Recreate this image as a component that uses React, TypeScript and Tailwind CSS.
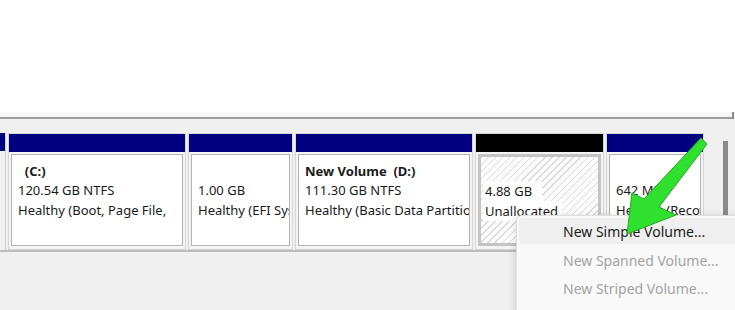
import React from "react";

const font = { fontFamily: '"Segoe UI", "Noto Sans", "Open Sans", sans-serif' };

function Partition({
  width,
  header = "bg-[#000080]",
  title,
  size,
  status,
  unallocated = false,
}: {
  width: string;
  header?: string;
  title?: string;
  size?: string;
  status?: string;
  unallocated?: boolean;
}) {
  return (
    <div className={`${width} flex flex-col shrink-0 border border-[#d6d6d6] bg-[#f4f4f4]`}>
      <div className={`h-[18px] ${header}`} />
      <div className="flex-1 p-[2px] pb-[3px]">
        {unallocated ? (
          <div className="h-full border-[3px] border-[#c4c4c4] bg-[repeating-linear-gradient(135deg,#d8d8d8_0px,#d8d8d8_1px,#ffffff_1px,#ffffff_5px)] pt-[24px] pl-[2px] text-[13px] leading-[20px] text-[#1a1a1a]">
            <div className="w-fit bg-white pr-[10px] pl-[2px]">{size}</div>
            <div className="w-fit bg-white pr-[4px] pl-[2px]">{status}</div>
          </div>
        ) : (
          <div className="h-full overflow-hidden whitespace-nowrap border border-[#b4b4b4] bg-white pl-[6px] pt-[6px] text-[13px] leading-[20px] text-[#1a1a1a]">
            <div className="h-[19px] font-bold whitespace-pre">{title ?? ""}</div>
            <div>{size}</div>
            <div>{status}</div>
          </div>
        )}
      </div>
    </div>
  );
}

export default function App() {
  return (
    <div className="relative h-[310px] w-[735px] overflow-hidden bg-[#f0f0f0]" style={font}>
      <div className="h-[112px] bg-white" />
      <div className="flex h-[7px]">
        <div className="flex-1 border-b-2 border-[#9c9c9c] bg-[#f6f6f6]" />
        <div className="w-[2px] bg-[#8c8c8c]" />
        <div className="w-[1px]" />
      </div>

      <div className="mt-[14px] flex h-[119px] items-stretch gap-[2px] border-b-2 border-[#bdbdbd]">
        <div className="flex w-[6px] shrink-0 flex-col border-r border-[#d0d0d0]">
          <div className="h-[18px] bg-[#000080]" />
        </div>
        <Partition width="w-[178px]" title="  (C:)" size="120.54 GB NTFS" status="Healthy (Boot, Page File," />
        <Partition width="w-[105px]" size="1.00 GB" status="Healthy (EFI System Partition)" />
        <Partition width="w-[178px]" title="New Volume  (D:)" size="111.30 GB NTFS" status="Healthy (Basic Data Partition)" />
        <Partition width="w-[129px]" header="bg-black" size="4.88 GB" status="Unallocated" unallocated />
        <Partition width="w-[98px]" size="642 MB" status="Healthy (Recovery Partition)" />
        <div className="ml-[17px] mt-[8px] h-[108px] w-[5px] bg-[#8a8a8a]" />
      </div>

      {/* context menu */}
      <div className="absolute left-[516px] top-[215px] h-[120px] w-[240px] rounded-[6px] border border-[#dedede] bg-[#f9f9f9] p-[2px] pr-0 text-[14px] text-[#1b1b1b] shadow-[0_2px_8px_rgba(0,0,0,0.18)]">
        <div className="flex h-[26px] items-center rounded-[4px] bg-[#efefef] pl-[44px]">New Simple Volume...</div>
        <div className="mt-[3px] flex h-[27px] items-center pl-[44px] text-[#a3a3a3]">New Spanned Volume...</div>
        <div className="flex h-[28px] items-center pl-[44px] text-[#a3a3a3]">New Striped Volume...</div>
        <div className="flex h-[28px] items-center pl-[44px] text-[#a3a3a3]">New Mirrored Volume...</div>
      </div>

      {/* green arrow */}
      <svg className="absolute left-0 top-0" width="735" height="310" viewBox="0 0 735 310">
        <path
          d="M701 138 L707 144 L659 207 L676 215 L627 234 L632 193 L644 199 Z"
          fill="#2fe02f"
          stroke="#22a822"
          strokeWidth="1"
          strokeLinejoin="round"
        />
      </svg>
    </div>
  );
}
